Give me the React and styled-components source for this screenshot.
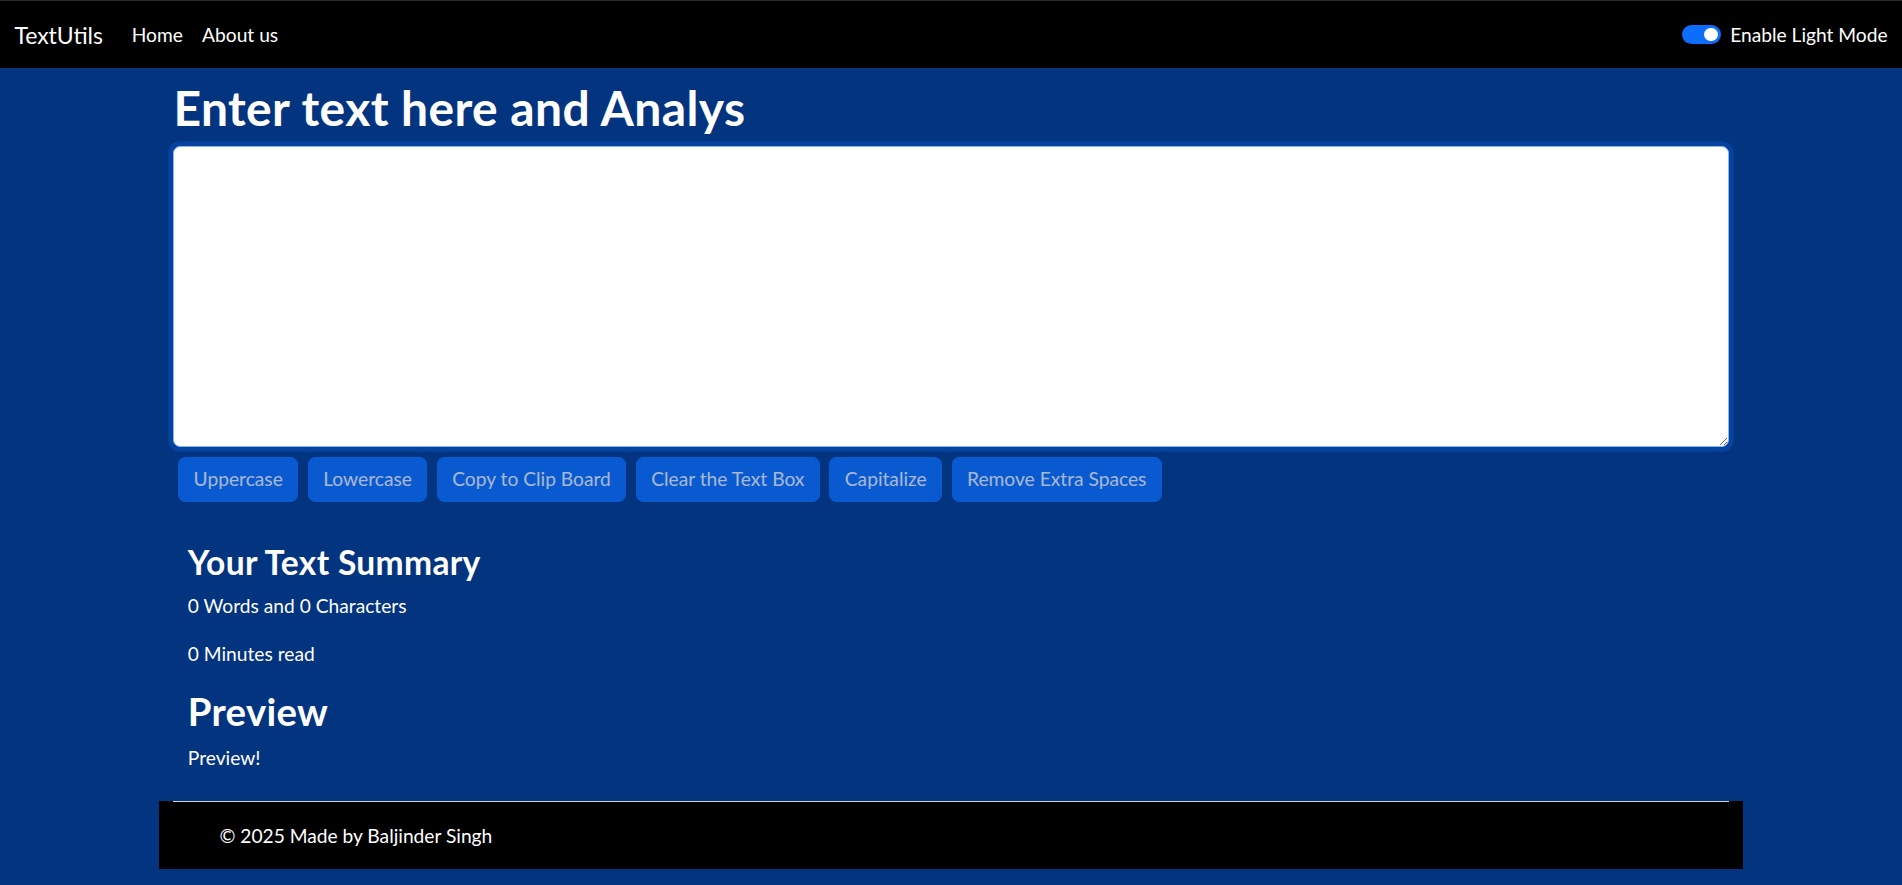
import styled, { createGlobalStyle } from "styled-components";

const FONT = `Lato, "Noto Sans", "Liberation Sans", sans-serif`;

const GlobalStyle = createGlobalStyle`
	* {
		box-sizing: border-box;
	}
	body {
		margin: 0;
		background: #03347f;
		color: #fff;
		font-family: ${FONT};
	}
`;

const Nav = styled.nav`
	display: flex;
	align-items: center;
	justify-content: space-between;
	height: 68px;
	padding: 0 14.4px;
	background: #000;
	border-top: 1px solid #2b2b2b;
`;

const NavLeft = styled.div`
	display: flex;
	align-items: center;
`;

const Brand = styled.a`
	font-size: 23px;
	color: #fff;
	margin-right: 19.2px;
	text-decoration: none;
`;

const NavLink = styled.a`
	font-size: 19.2px;
	padding: 0 9.6px;
	color: #fff;
	text-decoration: none;
`;

const ModeSwitch = styled.label`
	display: flex;
	align-items: center;
	gap: 9.6px;
	font-size: 19.2px;
	color: #fff;
`;

const Track = styled.span`
	position: relative;
	width: 38.4px;
	height: 19.2px;
	border-radius: 10px;
	background: #0d6efd;

	&::after {
		content: "";
		position: absolute;
		top: 3px;
		right: 3px;
		width: 13.2px;
		height: 13.2px;
		border-radius: 50%;
		background: #fff;
	}
`;

const Container = styled.main`
	width: 1555.2px;
	margin: 0 auto;
	padding-top: 11px;
`;

const Title = styled.h1`
	font-size: 48px;
	font-weight: 700;
	line-height: 1.2;
	letter-spacing: 0.4px;
	margin: 0 0 9.6px;
`;

const TextBox = styled.textarea`
	display: block;
	width: 100%;
	height: 301px;
	background: #fff;
	border: 1px solid #86b7fe;
	border-radius: 7.2px;
	box-shadow: 0 0 0 4.8px rgba(13, 110, 253, 0.25);
	outline: none;
	resize: vertical;
`;

const ButtonRow = styled.div`
	display: flex;
	margin-top: 10px;
`;

const ActionButton = styled.button`
	margin: 0 4.8px;
	padding: 7.2px 14.4px;
	font-family: ${FONT};
	font-size: 19.2px;
	line-height: 28.8px;
	color: #fff;
	background: #0d6efd;
	border: 1.2px solid #0d6efd;
	border-radius: 7.2px;
	opacity: 0.65;
`;

const Summary = styled.section`
	padding: 0 14.4px;
	margin-top: 40px;
`;

const SubTitle = styled.h3`
	font-size: ${(p) => (p.$big ? "38.4px" : "33.6px")};
	font-weight: 700;
	line-height: 1.2;
	letter-spacing: 0.3px;
	margin: 0 0 9.6px;
`;

const Text = styled.p`
	font-size: 19.2px;
	line-height: 28.8px;
	margin: 0 0 19.2px;
`;

const Footer = styled.footer`
	width: 1584px;
	height: 68px;
	margin: 28px auto 0;
	padding: 0 14.4px;
	background: #000;
	display: flex;
	flex-direction: column;
`;

const Rule = styled.hr`
	width: 100%;
	margin: 0;
	border: 0;
	border-top: 1px solid #d6d6d6;
`;

const Copy = styled.div`
	flex: 1;
	display: flex;
	align-items: center;
	padding-left: 46px;
	font-size: 19.2px;
`;

const buttons = [
	"Uppercase",
	"Lowercase",
	"Copy to Clip Board",
	"Clear the Text Box",
	"Capitalize",
	"Remove Extra Spaces",
];

const App = () => {
	return (
		<>
			<GlobalStyle />
			<Nav>
				<NavLeft>
					<Brand href='#'>TextUtils</Brand>
					<NavLink href='#'>Home</NavLink>
					<NavLink href='#'>About us</NavLink>
				</NavLeft>
				<ModeSwitch>
					<Track />
					Enable Light Mode
				</ModeSwitch>
			</Nav>

			<Container>
				<Title>Enter text here and Analys</Title>
				<TextBox rows='8' />
				<ButtonRow>
					{buttons.map((b) => (
						<ActionButton key={b} disabled>
							{b}
						</ActionButton>
					))}
				</ButtonRow>

				<Summary>
					<SubTitle>Your Text Summary</SubTitle>
					<Text>0 Words and 0 Characters</Text>
					<Text>0 Minutes read</Text>
					<SubTitle as='h2' $big>
						Preview
					</SubTitle>
					<Text>Preview!</Text>
				</Summary>
			</Container>

			<Footer>
				<Rule />
				<Copy>© 2025 Made by Baljinder Singh</Copy>
			</Footer>
		</>
	);
};

export default App;
